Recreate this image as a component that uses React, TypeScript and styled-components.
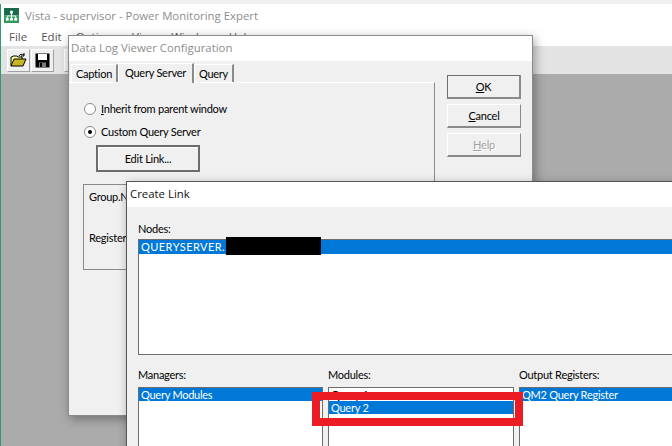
import styled, { createGlobalStyle } from "styled-components";

const GlobalStyle = createGlobalStyle`
  html, body {
    margin: 0;
    padding: 0;
    overflow: hidden;
  }
  body {
    font-family: Lato, "Liberation Sans", sans-serif;
    font-size: 11px;
    letter-spacing: -0.25px;
    color: #000;
  }
`;

const Desktop = styled.div`
  position: relative;
  width: 672px;
  height: 446px;
  overflow: hidden;
  background: #f0f0f0;
  padding-top: 4px;
  box-sizing: border-box;
`;

const MainWindow = styled.div`
  height: 442px;
  border-left: 1px solid #2a9d6b;
  display: flex;
  flex-direction: column;
  background: #fff;
`;

const TitleBar = styled.div`
  height: 25px;
  box-sizing: border-box;
  padding: 0 0 2px 3px;
  display: flex;
  align-items: center;
  gap: 6px;
  font-family: "Open Sans", sans-serif;
  font-size: 11.4px;
  letter-spacing: 0;
  color: #8d8d8d;
`;

const MenuBar = styled.div`
  height: 17px;
  box-sizing: border-box;
  padding: 0 0 3px 8px;
  display: flex;
  gap: 14px;
  align-items: center;
  font-family: "Open Sans", sans-serif;
  font-size: 11.5px;
  letter-spacing: 0;
  color: #555;
`;

const Toolbar = styled.div`
  height: 28px;
  background: #e3e3e3;
  display: flex;
  align-items: center;
  padding-left: 6px;
  gap: 1px;
`;

const ToolButton = styled.div<{ $gapLeft?: number }>`
  width: 23px;
  height: 23px;
  margin-left: ${(p) => p.$gapLeft ?? 0}px;
  box-sizing: border-box;
  background: #f0f0f0;
  border: 1px solid #a0a0a0;
  border-top-color: #fff;
  border-left-color: #fff;
  display: flex;
  align-items: center;
  justify-content: center;
`;

const Workspace = styled.div`
  flex: 1;
  background: #ababab;
`;

const Dialog = styled.div<{ $x: number; $y: number; $w: number; $h: number; $dark?: boolean }>`
  position: absolute;
  left: ${(p) => p.$x}px;
  top: ${(p) => p.$y}px;
  width: ${(p) => p.$w}px;
  height: ${(p) => p.$h}px;
  box-sizing: border-box;
  border: 1px solid ${(p) => (p.$dark ? "#555" : "#8a8a8a")};
  background: #f0f0f0;
  display: flex;
  flex-direction: column;
  box-shadow: 2px 3px 10px rgba(0, 0, 0, 0.35);
`;

const DialogTitle = styled.div<{ $dim?: boolean }>`
  height: 25px;
  flex: none;
  box-sizing: border-box;
  background: #fff;
  display: flex;
  align-items: center;
  padding: 0 0 2px ${(p) => (p.$dim ? 2 : 3)}px;
  font-family: "Open Sans", sans-serif;
  font-size: 11.4px;
  letter-spacing: 0;
  color: ${(p) => (p.$dim ? "#8d8d8d" : "#111")};
`;

const ConfigBody = styled.div`
  flex: 1;
  display: flex;
  gap: 12px;
`;

const TabArea = styled.div`
  width: 366px;
  display: flex;
  flex-direction: column;
  padding-top: 1px;
`;

const TabStrip = styled.div`
  display: flex;
  height: 20px;
  align-items: flex-end;
  padding-left: 2px;
`;

const Tab = styled.div<{ $active?: boolean; $w: number }>`
  width: ${(p) => p.$w}px;
  height: ${(p) => (p.$active ? 20 : 18)}px;
  box-sizing: border-box;
  padding-bottom: ${(p) => (p.$active ? 2 : 0)}px;
  display: flex;
  align-items: center;
  justify-content: center;
  border-top: 1px solid #fff;
  border-left: 1px solid #fff;
  border-right: 2px solid #8a8a8a;
  margin-bottom: ${(p) => (p.$active ? -1 : 0)}px;
  background: #f0f0f0;
  position: relative;
`;

const TabPanel = styled.div`
  flex: 1;
  border-top: 1px solid #fff;
  border-right: 1px solid #8a8a8a;
  padding: 14px 0 0 15px;
  display: flex;
  flex-direction: column;
  align-items: flex-start;
`;

const RadioRow = styled.div`
  display: flex;
  align-items: center;
  gap: 5px;
  height: 23px;
`;

const Radio = styled.span<{ $checked?: boolean }>`
  width: 12px;
  height: 12px;
  box-sizing: border-box;
  border-radius: 50%;
  background: #fff;
  border: 1px solid #8a8a8a;
  display: flex;
  align-items: center;
  justify-content: center;
  &::after {
    content: "";
    width: 4px;
    height: 4px;
    border-radius: 50%;
    background: ${(p) => (p.$checked ? "#000" : "transparent")};
  }
`;

const Underlined = styled.span`
  text-decoration: underline;
`;

const EditLink = styled.div`
  margin: 2px 0 0 12px;
  width: 104px;
  height: 27px;
  box-sizing: border-box;
  border: 2px solid #6d6d6d;
  box-shadow: inset 1px 1px 0 #fff;
  display: flex;
  align-items: center;
  justify-content: center;
`;

const InfoBox = styled.div`
  margin: 12px 0 0 -1px;
  width: 300px;
  height: 86px;
  box-sizing: border-box;
  border: 1px solid #8a8a8a;
  padding: 5px 5px;
  display: flex;
  flex-direction: column;
  gap: 28px;
`;

const ButtonColumn = styled.div`
  display: flex;
  flex-direction: column;
  gap: 5px;
  padding-top: 14px;
`;

const DialogButton = styled.div<{ $primary?: boolean; $disabled?: boolean }>`
  width: 74px;
  height: 24px;
  box-sizing: border-box;
  border: 1px solid #8a8a8a;
  border-top-color: ${(p) => (p.$primary ? "#6d6d6d" : "#fff")};
  border-left-color: ${(p) => (p.$primary ? "#6d6d6d" : "#fff")};
  border-bottom-width: 2px;
  border-right-width: ${(p) => (p.$primary ? 2 : 1)}px;
  display: flex;
  align-items: center;
  justify-content: center;
  color: ${(p) => (p.$disabled ? "#a0a0a0" : "#000")};
  text-shadow: ${(p) => (p.$disabled ? "1px 1px 0 #fff" : "none")};
`;

const LinkBody = styled.div`
  flex: 1;
  padding: 13px 0 0 11px;
  display: flex;
  flex-direction: column;
`;

const FieldLabel = styled.div<{ $gap: number }>`
  height: 16px;
  margin-bottom: ${(p) => p.$gap}px;
  display: flex;
  align-items: center;
`;

const ListBox = styled.div<{ $w?: number; $h: number }>`
  width: ${(p) => (p.$w ? `${p.$w}px` : "auto")};
  height: ${(p) => p.$h}px;
  box-sizing: border-box;
  border: 1px solid #6d6d6d;
  background: #fff;
  overflow: hidden;
  flex: none;
`;

const ListItem = styled.div<{ $selected?: boolean; $caps?: boolean }>`
  height: ${(p) => (p.$caps ? 14 : 13)}px;
  line-height: ${(p) => (p.$caps ? 14 : 13)}px;
  padding-left: 2px;
  white-space: nowrap;
  letter-spacing: ${(p) => (p.$caps ? "0.45px" : "-0.25px")};
  background: ${(p) => (p.$selected ? "#0078d7" : "transparent")};
  color: ${(p) => (p.$selected ? "#fff" : "#000")};
`;

const Columns = styled.div`
  display: flex;
  gap: 5px;
  margin-top: 11px;
`;

const Column = styled.div`
  display: flex;
  flex-direction: column;
`;

const Redaction = styled.div`
  position: absolute;
  left: 226px;
  top: 237px;
  width: 95px;
  height: 18px;
  background: #000;
`;

const Highlight = styled.div`
  position: absolute;
  left: 312px;
  top: 392px;
  width: 211px;
  height: 34px;
  box-sizing: border-box;
  border: 8px solid #ec1c24;
`;

const VistaIcon = () => (
  <svg width="15" height="15" viewBox="0 0 16 16">
    <rect width="16" height="8" fill="#1a6a4a" />
    <rect y="8" width="16" height="8" fill="#2f9a5c" />
    <path d="M8 5v3M3.5 11V8.5h9V11M8 8v3" stroke="#fff" fill="none" />
    <rect x="6.5" y="3" width="3" height="3" fill="#fff" />
    <rect x="2" y="10.5" width="3" height="3" fill="#fff" />
    <rect x="6.5" y="10.5" width="3" height="3" fill="#fff" />
    <rect x="11" y="10.5" width="3" height="3" fill="#fff" />
  </svg>
);

const OpenIcon = () => (
  <svg width="17" height="15" viewBox="0 0 17 15">
    <path d="M1 13V4h1l1-1h4l1 1h4v2" fill="#ffff99" stroke="#000" />
    <path d="M1 13l3-7h12l-3 7z" fill="#c8b820" stroke="#000" />
    <path d="M9 3c1-2 3-2 5-1M14 0v3h-3" fill="none" stroke="#000" />
  </svg>
);

const SaveIcon = () => (
  <svg width="15" height="15" viewBox="0 0 15 15">
    <rect x="0.5" y="0.5" width="14" height="14" fill="#000" />
    <rect x="3" y="1" width="9" height="6" fill="#fff" />
    <rect x="4" y="9.5" width="7" height="4.5" fill="#7a7a7a" />
    <rect x="5" y="10" width="2" height="4" fill="#000" />
  </svg>
);

const App = (): JSX.Element => {
  return (
    <Desktop>
      <GlobalStyle />
      <MainWindow>
        <TitleBar>
          <VistaIcon />
          Vista - supervisor - Power Monitoring Expert
        </TitleBar>
        <MenuBar>
          <span>File</span>
          <span>Edit</span>
          <span>Options</span>
          <span>View</span>
          <span>Window</span>
          <span>Help</span>
        </MenuBar>
        <Toolbar>
          <ToolButton>
            <OpenIcon />
          </ToolButton>
          <ToolButton>
            <SaveIcon />
          </ToolButton>
          <ToolButton $gapLeft={9} />
        </Toolbar>
        <Workspace />
      </MainWindow>

      <Dialog $x={68} $y={35} $w={465} $h={381}>
        <DialogTitle $dim>Data Log Viewer Configuration</DialogTitle>
        <ConfigBody>
          <TabArea>
            <TabStrip>
              <Tab $w={47}>Caption</Tab>
              <Tab $active $w={76}>
                Query Server
              </Tab>
              <Tab $w={40}>Query</Tab>
            </TabStrip>
            <TabPanel>
              <RadioRow>
                <Radio />
                <span>
                  <Underlined>I</Underlined>nherit from parent window
                </span>
              </RadioRow>
              <RadioRow>
                <Radio $checked />
                <span>Custom Query Server</span>
              </RadioRow>
              <EditLink>Edit Link...</EditLink>
              <InfoBox>
                <span>Group.Name</span>
                <span>Register</span>
              </InfoBox>
            </TabPanel>
          </TabArea>
          <ButtonColumn>
            <DialogButton $primary>
              <span>
                <Underlined>O</Underlined>K
              </span>
            </DialogButton>
            <DialogButton>
              <span>
                <Underlined>C</Underlined>ancel
              </span>
            </DialogButton>
            <DialogButton $disabled>
              <span>
                <Underlined>H</Underlined>elp
              </span>
            </DialogButton>
          </ButtonColumn>
        </ConfigBody>
      </Dialog>

      <Dialog $x={126} $y={181} $w={560} $h={290} $dark>
        <DialogTitle>Create Link</DialogTitle>
        <LinkBody>
          <FieldLabel $gap={3}>Nodes:</FieldLabel>
          <ListBox $h={116}>
            <ListItem $selected $caps>
              QUERYSERVER.
            </ListItem>
          </ListBox>
          <Columns>
            <Column>
              <FieldLabel $gap={5}>Managers:</FieldLabel>
              <ListBox $w={185} $h={80}>
                <ListItem $selected>Query Modules</ListItem>
              </ListBox>
            </Column>
            <Column>
              <FieldLabel $gap={5}>Modules:</FieldLabel>
              <ListBox $w={186} $h={80}>
                <ListItem>Query 1</ListItem>
                <ListItem $selected>Query 2</ListItem>
              </ListBox>
            </Column>
            <Column>
              <FieldLabel $gap={5}>Output Registers:</FieldLabel>
              <ListBox $w={180} $h={80}>
                <ListItem $selected>QM2 Query Register</ListItem>
              </ListBox>
            </Column>
          </Columns>
        </LinkBody>
      </Dialog>

      <Redaction />
      <Highlight />
    </Desktop>
  );
};

export default App;
